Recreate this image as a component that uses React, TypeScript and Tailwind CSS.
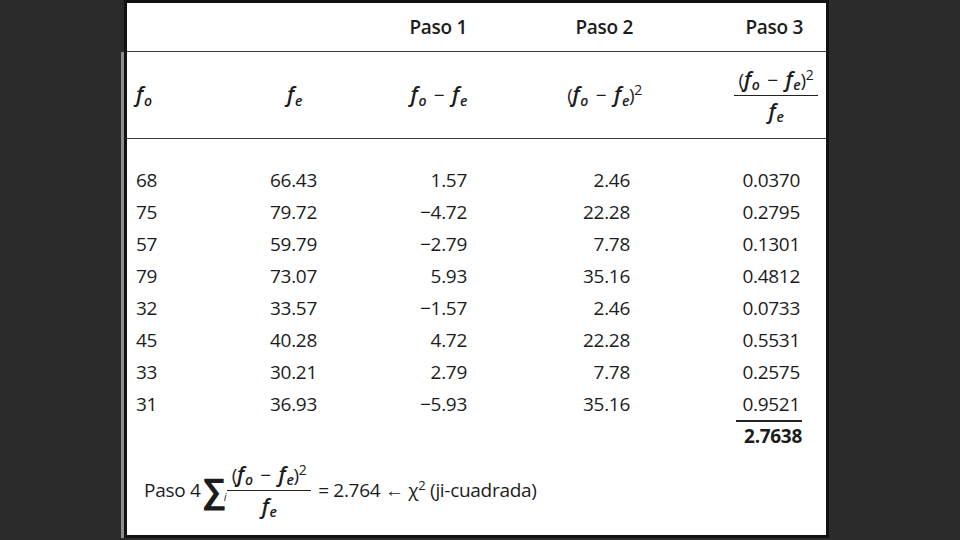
const rows = [
  ['68', '66.43', '1.57', '2.46', '0.0370'],
  ['75', '79.72', '−4.72', '22.28', '0.2795'],
  ['57', '59.79', '−2.79', '7.78', '0.1301'],
  ['79', '73.07', '5.93', '35.16', '0.4812'],
  ['32', '33.57', '−1.57', '2.46', '0.0733'],
  ['45', '40.28', '4.72', '22.28', '0.5531'],
  ['33', '30.21', '2.79', '7.78', '0.2575'],
  ['31', '36.93', '−5.93', '35.16', '0.9521'],
];

const cols = ['w-[64px]', 'w-[117px] text-right', 'w-[150px] text-right', 'w-[163px] text-right', 'w-[170px] text-right'];

function F({ sub }: { sub: string }) {
  return (
    <span className="whitespace-nowrap">
      <span className="italic font-semibold text-[21px]">f</span>
      <sub className="italic font-semibold text-[14px] ml-[1px]">{sub}</sub>
    </span>
  );
}

function Diff() {
  return (
    <span className="whitespace-nowrap">
      <F sub="o" /> <span className="mx-[3px]">−</span> <F sub="e" />
    </span>
  );
}

function DiffSq() {
  return (
    <span className="whitespace-nowrap">
      (<F sub="o" /> <span className="mx-[3px]">−</span> <F sub="e" />)<sup className="text-[14px]">2</sup>
    </span>
  );
}

function Fraction({ line = 'w-[84px]' }: { line?: string }) {
  return (
    <span className="inline-flex flex-col items-center align-middle leading-[30px]">
      <span>
        <DiffSq />
      </span>
      <span className={`${line} h-px bg-[#222]`} />
      <span>
        <F sub="e" />
      </span>
    </span>
  );
}

export default function App() {
  return (
    <div className="w-[960px] h-[540px] bg-[#2b2b2b] flex pl-[121px] font-['Open_Sans',sans-serif] text-[#1c1c1c]">
      {/* grey edge strip */}
      <div className="w-[3px] flex flex-col">
        <div className="h-[52px]" />
        <div className="flex-1 bg-[#8c8c8c] mb-[2px]" />
      </div>

      <div className="w-[705px] h-[538px] bg-white border-[3px] border-[#111] flex flex-col text-[19px] tracking-[-0.3px]">
        {/* steps */}
        <div className="h-[49px] shrink-0 flex items-center px-[9px] font-semibold border-b border-[#3a3a3a]">
          <div className={cols[0]} />
          <div className={cols[1]} />
          <div className={cols[2]}>Paso 1</div>
          <div className={cols[3]}>
            <span className="inline-block -mr-[3px]">Paso 2</span>
          </div>
          <div className={cols[4]}>
            <span className="inline-block -mr-[3px]">Paso 3</span>
          </div>
        </div>

        {/* symbols */}
        <div className="h-[87px] shrink-0 flex items-center px-[9px] border-b border-[#3a3a3a]">
          <div className={cols[0]}>
            <F sub="o" />
          </div>
          <div className={cols[1]}>
            <span className="inline-block mr-[15px]">
              <F sub="e" />
            </span>
          </div>
          <div className={cols[2]}>
            <Diff />
          </div>
          <div className={cols[3]}>
            <span className="inline-block -mr-[12px]">
              <DiffSq />
            </span>
          </div>
          <div className={cols[4]}>
            <span className="inline-block -mr-[18px]">
              <Fraction />
            </span>
          </div>
        </div>

        {/* data */}
        <div className="pt-[25px] px-[9px] flex flex-col">
          {rows.map((r, i) => (
            <div key={i} className="h-[32px] flex items-center">
              {r.map((v, j) => (
                <div key={j} className={`${cols[j]} shrink-0`}>
                  {v}
                </div>
              ))}
            </div>
          ))}
          <div className="h-[30px] flex items-start">
            <div className="w-[600px] shrink-0" />
            <div className="w-[66px] shrink-0 border-t-2 border-[#222] text-right font-bold leading-[28px]">
              2.7638
            </div>
          </div>
        </div>

        {/* step 4 */}
        <div className="mt-[8px] pl-[17px] flex items-center h-[64px] whitespace-nowrap text-[19px]">
          <span>Paso 4</span>
          <span className="ml-[3px] flex items-end">
            <span className="text-[34px] font-bold leading-none">∑</span>
            <span className="italic text-[11px] -ml-[1px] mb-[2px]">i</span>
          </span>
          <span className="ml-[1px]">
            <Fraction line="w-[84px]" />
          </span>
          <span className="ml-[7px]">
            = 2.764 <span className="font-light">←</span> χ<sup className="text-[13px]">2</sup> (ji-cuadrada)
          </span>
        </div>
      </div>
    </div>
  );
}
